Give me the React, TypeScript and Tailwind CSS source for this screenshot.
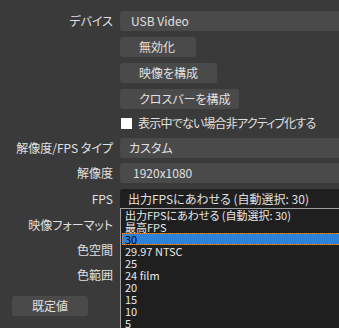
const fps = ["出力FPSにあわせる (自動選択: 30)", "最高FPS", "30", "29.97 NTSC", "25", "24 film", "20", "15", "10", "5"];

function Label({ children }: { children: React.ReactNode }) {
  return <div className="w-[113px] shrink-0 text-right">{children}</div>;
}

function Btn({ children, w }: { children: React.ReactNode; w: string }) {
  return <div className={`${w} h-[20px] rounded-[3px] bg-[#4a4a4a] pl-[19px] leading-[20px]`}>{children}</div>;
}

export default function App() {
  return (
    <div className="relative h-[328px] w-[339px] overflow-hidden bg-[#3a3a3a] pt-[11px] text-[12px] text-[#e0e0e0] [font-family:'Noto_Sans_CJK_JP',sans-serif] [font-feature-settings:'palt']">
      <div className="flex h-[20px] items-center gap-[7px]">
        <Label>デバイス</Label>
        <div className="h-[20px] flex-1 rounded-l-[3px] bg-[#4a4a4a] pl-[11px] leading-[20px]">USB Video</div>
      </div>
      <div className="mt-[6px] flex gap-[7px]">
        <Label>{""}</Label>
        <Btn w="w-[76px]">無効化</Btn>
      </div>
      <div className="mt-[6px] flex gap-[7px]">
        <Label>{""}</Label>
        <Btn w="w-[97px]">映像を構成</Btn>
      </div>
      <div className="mt-[6px] flex gap-[7px]">
        <Label>{""}</Label>
        <Btn w="w-[119px]">クロスバーを構成</Btn>
      </div>
      <div className="mt-[4px] flex h-[20px] items-center gap-[7px]">
        <Label>{""}</Label>
        <div className="flex items-center gap-[6px] pl-[1px]">
          <span className="h-[11px] w-[11px] bg-white" />
          <span className="tracking-[-0.8px]">表示中でない場合非アクティブ化する</span>
        </div>
      </div>
      <div className="mt-[5px] flex h-[20px] items-center gap-[7px]">
        <Label>解像度/FPS タイプ</Label>
        <div className="h-[20px] flex-1 rounded-l-[3px] bg-[#4a4a4a] pl-[9px] leading-[20px]">カスタム</div>
      </div>
      <div className="mt-[5px] flex h-[20px] items-center gap-[7px]">
        <Label>解像度</Label>
        <div className="h-[20px] flex-1 rounded-l-[3px] bg-[#4a4a4a] pl-[13px] leading-[20px]">1920x1080</div>
      </div>
      <div className="mt-[6px] flex h-[19px] items-center gap-[7px]">
        <Label>FPS</Label>
        <div className="h-[19px] flex-1 rounded-tl-[3px] bg-[#1f1f1f] pl-[8px] leading-[19px]">出力FPSにあわせる (自動選択: 30)</div>
      </div>
      <div className="mt-[7px] flex h-[20px] items-center gap-[7px]">
        <Label>映像フォーマット</Label>
      </div>
      <div className="mt-[5px] flex h-[20px] items-center gap-[7px]">
        <Label>色空間</Label>
      </div>
      <div className="mt-[5px] flex h-[20px] items-center gap-[7px]">
        <Label>色範囲</Label>
      </div>
      <div className="ml-[12px] mt-[11px] h-[20px] w-[76px] rounded-[3px] bg-[#4a4a4a] text-center leading-[20px]">既定値</div>

      <div className="absolute left-[120px] right-[-4px] top-[208px] bottom-[-4px] border-l border-t border-[#a0a0a0] bg-[#1f1f1f] pl-[1px] text-[11px]">
        {fps.map((f) =>
          f === "30" ? (
            <div key={f} className="h-[12px] border border-dotted border-[#e8913a] bg-[#2d83da] pl-[2px] leading-[10px] text-black">
              {f}
            </div>
          ) : (
            <div key={f} className="h-[12px] pl-[3px] leading-[12px] text-[#e8e8e8]">
              {f}
            </div>
          )
        )}
      </div>
    </div>
  );
}
